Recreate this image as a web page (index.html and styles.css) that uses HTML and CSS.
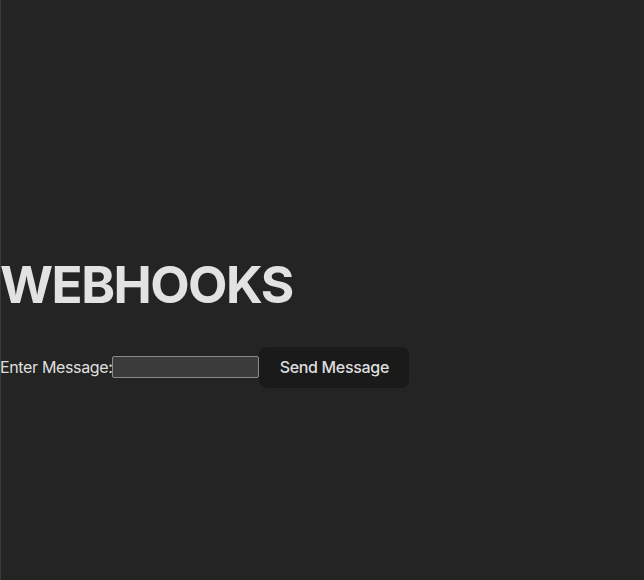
FILE: index.html
```html
<!DOCTYPE html>
<html lang="en">
<head>
<meta charset="UTF-8">
<title>Webhooks</title>
<link rel="stylesheet" href="styles.css">
</head>
<body>
<div class="root">
  <h1 class="title">WEBHOOKS</h1>
  <form class="row">
    <label class="label" for="msg">Enter Message:</label>
    <input class="field" id="msg" type="text">
    <button class="send" type="button">Send Message</button>
  </form>
</div>
</body>
</html>
```
FILE: styles.css
```css
:root {
  font-family: Inter, "Noto Sans", system-ui, sans-serif;
  line-height: 1.5;
  font-weight: 400;
  color-scheme: dark;
  color: rgba(255, 255, 255, 0.87);
  background-color: #242424;
}
html, body { height: 100%; }
body {
  margin: 0;
  display: flex;
  align-items: center;
  min-width: 320px;
  min-height: 100vh;
  border-left: 1px solid #3a3a3a;
  box-sizing: border-box;
}
.root { margin-left: -1px; padding-top: 30px; }
.title {
  font-size: 3.2em;
  line-height: 1.1;
  margin: 0.67em 0;
  font-weight: 700;
  letter-spacing: -0.03em;
}
.row {
  display: flex;
  align-items: center;
}
.label { font-size: 16px; letter-spacing: -0.022em; }
.field {
  width: 147px;
  height: 22px;
  box-sizing: border-box;
  background: #3b3b3b;
  border: 1px solid #8a8a8a;
  border-radius: 2px;
  color: #fff;
  padding: 1px 2px;
  font: inherit;
  font-size: 13px;
}
.send {
  border-radius: 8px;
  border: 1px solid transparent;
  padding: 0.6em 1.2em;
  font-size: 16px;
  font-weight: 500;
  font-family: inherit;
  letter-spacing: -0.02em;
  background-color: #1a1a1a;
  color: rgba(255, 255, 255, 0.87);
  cursor: pointer;
  line-height: normal;
}
```
